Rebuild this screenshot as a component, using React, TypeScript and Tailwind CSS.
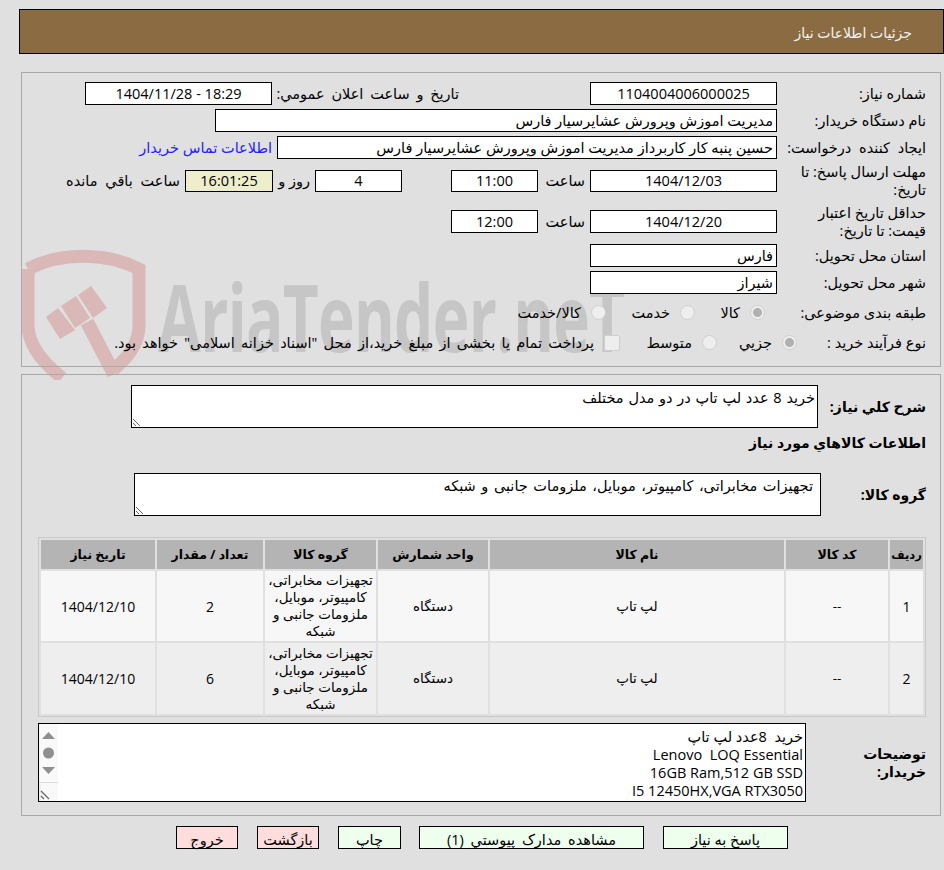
import React from 'react';

const Box: React.FC<{ className?: string; short?: boolean; children?: React.ReactNode }> = ({ className = 'bg-white', short, children }) => (
  <div className={`${short ? 'h-[22px] leading-[20px]' : 'h-[23px] leading-[21px]'} shrink-0 border border-black whitespace-nowrap overflow-hidden ${className}`}>
    {children}
  </div>
);

const Label: React.FC<{ className?: string; children: React.ReactNode }> = ({ className = '', children }) => (
  <div className={`w-[149px] shrink-0 pl-1 leading-[18px] ${className}`}>{children}</div>
);

const Radio: React.FC<{ checked?: boolean; className?: string }> = ({ checked, className = '' }) => (
  <input
    type="radio"
    disabled
    readOnly
    checked={!!checked}
    className={`appearance-none size-[15px] shrink-0 rounded-full border border-[#cfcfcf] bg-[#eeeeee] checked:bg-[radial-gradient(circle,#b0b0b0_0,#b0b0b0_4px,#eeeeee_5px)] ${className}`}
  />
);

const rows = [
  { id: 1, qty: 2 },
  { id: 2, qty: 6 },
];

const headers = ['ردیف', 'کد کالا', 'نام کالا', 'واحد شمارش', 'گروه کالا', 'تعداد / مقدار', 'تاریخ نیاز'];

const Watermark = () => (
  <div className="absolute inset-x-0 top-0 h-[390px] overflow-hidden">
    <svg className="absolute left-[15px] top-[245px]" width="140" height="135" viewBox="15 245 140 135" fill="none">
      <path
        d="M28 269 C60 252 106 252 139 269 V325 C139 345 127 358 113 370 M28 269 V325 C28 345 42 362 62 378"
        stroke="#dbb8b8"
        strokeWidth="13"
      />
      <path d="M46 317 L58 308 L75 330 L60 339 Z M61 306 L76 296 L90 318 L75 328 Z M78 295 L91 286 L107 308 L93 318 Z" fill="#dbb8b8" />
      <path d="M87 322 L114 374" stroke="#dbb8b8" strokeWidth="14" />
    </svg>
    <div
      dir="ltr"
      className="absolute left-[158px] top-[256px] font-['Open_Sans',sans-serif] font-bold text-[94px] leading-[120px] tracking-[-1px] text-[#c6c6c6] whitespace-nowrap origin-left scale-x-[0.66]"
    >
      AriaTender.neT
    </div>
  </div>
);

export default function App() {
  return (
    <div
      dir="rtl"
      className="relative min-h-[870px] overflow-hidden bg-[#e0e0e0] pt-[9px] font-['Open_Sans','DejaVu_Sans',sans-serif] text-[14.5px] text-black"
    >
      <Watermark />

      <div className="relative">
        <header className="ml-[19px] flex h-[45px] items-center border border-black bg-[#8b6c42] pr-[31px] pt-[1px] text-[14px] text-[#f2f2f2]">
          جزئیات اطلاعات نیاز
        </header>

        {/* main info */}
        <section className="ml-[21px] mr-[3px] mt-[18px] h-[295px] border border-[#a9a9a9] pr-[14px] pt-[9px]">
          <div className="flex h-[23px] items-center">
            <Label>شماره نیاز:</Label>
            <Box className="w-[187px] bg-white text-center">1104004006000025</Box>
            <div className="mr-[131px] w-[187px] shrink-0 whitespace-nowrap [word-spacing:3px]">تاریخ و ساعت اعلان عمومي:</div>
            <Box className="w-[187px] bg-white text-center">18:29 - 1404/11/28</Box>
          </div>
          <div className="mt-1 flex h-[23px] items-center">
            <Label>نام دستگاه خریدار:</Label>
            <Box className="w-[562px] bg-white pr-[3px]">مدیریت اموزش وپرورش عشایرسیار فارس</Box>
          </div>
          <div className="mt-1 flex h-[23px] items-center">
            <Label className="[word-spacing:4px]">ایجاد کننده درخواست:</Label>
            <Box className="w-[500px] bg-white pr-[3px]">حسین پنبه کار کاربرداز مدیریت اموزش وپرورش عشایرسیار فارس</Box>
            <a className="mr-[5px] whitespace-nowrap text-[#2222ff]" href="#">اطلاعات تماس خریدار</a>
          </div>
          <div className="mt-[11px] flex h-[22px] items-center">
            <Label>
              <div className="-my-[9px]">مهلت ارسال پاسخ: تا تاریخ:</div>
            </Label>
            <Box short className="w-[187px] bg-white text-center">1404/12/03</Box>
            <div className="w-[52px] shrink-0 pr-[5px]">ساعت</div>
            <Box short className="w-[87px] bg-white text-center">11:00</Box>
            <div className="w-[49px] shrink-0" />
            <Box short className="w-[87px] bg-white text-center">4</Box>
            <div className="w-[42px] shrink-0 pr-[5px] whitespace-nowrap">روز و</div>
            <Box short className="w-[88px] bg-[#eeeecc] text-center">16:01:25</Box>
            <div className="mr-[5px] whitespace-nowrap [word-spacing:4px]">ساعت باقي مانده</div>
          </div>
          <div className="mt-[18px] flex h-[23px] items-center">
            <Label>
              <div className="-my-[9px]">حداقل تاریخ اعتبار قیمت: تا تاریخ:</div>
            </Label>
            <Box className="w-[187px] bg-white text-center">1404/12/20</Box>
            <div className="w-[52px] shrink-0 pr-[5px]">ساعت</div>
            <Box className="w-[87px] bg-white text-center">12:00</Box>
          </div>
          <div className="mt-[11px] flex h-[23px] items-center">
            <Label>استان محل تحویل:</Label>
            <Box className="w-[187px] bg-white pr-[3px]">فارس</Box>
          </div>
          <div className="mt-1 flex h-[23px] items-center">
            <Label>شهر محل تحویل:</Label>
            <Box className="w-[187px] bg-white pr-[3px]">شیراز</Box>
          </div>
          <div className="mt-[7px] flex h-[23px] items-center">
            <Label>طبقه بندی موضوعی:</Label>
            <Radio checked className="mr-[12px]" />
            <span className="mr-[10px] w-[45px]">کالا</span>
            <Radio />
            <span className="mr-[10px] w-[64px]">خدمت</span>
            <Radio />
            <span className="mr-[10px] whitespace-nowrap">کالا/خدمت</span>
          </div>
          <div className="mt-[7px] flex h-[23px] items-center">
            <Label>نوع فرآیند خرید :</Label>
            <Radio checked className="mr-[-20px]" />
            <span className="mr-[10px] w-[55px]">جزيي</span>
            <Radio />
            <span className="mr-[10px] w-[72px]">متوسط</span>
            <input type="checkbox" disabled className="appearance-none size-[16px] shrink-0 rounded-[2px] border border-[#cfcfcf] bg-[#eeeeee]" />
            <span className="mr-[10px] whitespace-nowrap [word-spacing:2.500px]">پرداخت تمام یا بخشی از مبلغ خرید،از محل "اسناد خزانه اسلامی" خواهد بود.</span>
          </div>
        </section>

        {/* description, items */}
        <section className="ml-[21px] mr-[3px] mt-[7px] h-[442px] border border-[#a9a9a9] pr-[14px] pt-[10px]">
          <div className="flex items-center">
            <div className="w-[108px] shrink-0 text-[14px] font-bold">شرح کلي نیاز:</div>
            <textarea
              readOnly
              value="خرید 8 عدد لپ تاپ در دو مدل مختلف"
              className="h-[43px] w-[687px] border border-black bg-white pr-[2px] pt-[3px] text-[14.5px] leading-[18px] [word-spacing:1px]"
            />
          </div>
          <div className="mt-[6px] text-[14px] font-bold leading-[18px]">اطلاعات کالاهاي مورد نياز</div>
          <div className="mt-[21px] flex items-center">
            <div className="w-[105px] shrink-0 text-[14px] font-bold">گروه کالا:</div>
            <textarea
              readOnly
              value="تجهیزات مخابراتی، کامپیوتر، موبایل، ملزومات جانبی و شبکه"
              className="h-[43px] w-[687px] border border-black bg-white pr-[7px] pt-[3px] text-[14.5px] leading-[18px] [word-spacing:1.800px]"
            />
          </div>

          <table className="mt-[21px] w-[888px] table-fixed border-separate border-spacing-[2px] border border-[#c8c8c8] text-center text-[13.500px] leading-[17px]">
            <colgroup>
              <col className="w-[33px]" />
              <col className="w-[102px]" />
              <col className="w-[294px]" />
              <col className="w-[110px]" />
              <col className="w-[111px]" />
              <col className="w-[106px]" />
              <col className="w-[114px]" />
            </colgroup>
            <thead>
              <tr className="h-[29px] bg-[#b4b4b4]">
                {headers.map((h, i) => (
                  <th key={h} className={`p-0 font-bold whitespace-nowrap ${i === 0 ? 'text-[11.500px]' : 'text-[12.500px]'}`}>{h}</th>
                ))}
              </tr>
            </thead>
            <tbody>
              {rows.map((r) => (
                <tr key={r.id} className={r.id === 1 ? 'bg-[#f7f7f7]' : 'bg-[#eeeeee]'}>
                  <td className="p-0 text-[14px]">{r.id}</td>
                  <td className="p-0">--</td>
                  <td className="p-0">لپ تاپ</td>
                  <td className="p-0">دستگاه</td>
                  <td className={`p-0 ${r.id === 1 ? 'h-[70px]' : 'h-[71px]'}`}>تجهیزات مخابراتی، کامپیوتر، موبایل، ملزومات جانبی و شبکه</td>
                  <td className="p-0 text-[14px]">{r.qty}</td>
                  <td className="p-0 text-[14px]">1404/12/10</td>
                </tr>
              ))}
            </tbody>
          </table>

          <div className="mt-[6px] flex items-center">
            <div className="w-[120px] shrink-0 pl-[20px] text-[14px] font-bold leading-[18px]">توضیحات خریدار:</div>
            <div className="flex h-[79px] w-[768px] border border-black bg-white">
              <div className="flex-1 overflow-hidden pr-[2px] pt-[4px] leading-[18px]">
                <div>خرید&nbsp; 8عدد لپ تاپ</div>
                <div>Lenovo&nbsp; LOQ Essential</div>
                <div>16GB Ram,512 GB SSD</div>
                <div>I5 12450HX,VGA RTX3050</div>
              </div>
              <svg className="shrink-0" width="19" height="77" viewBox="0 0 19 77">
                <rect width="19" height="77" fill="#f9f9f9" />
                <path d="M3 15 L9.500 8 L16 15 Z M3 43 L16 43 L9.500 50 Z" fill="#8f8f8f" />
                <circle cx="9.500" cy="29" r="5.500" fill="#8f8f8f" />
                <path d="M0 58.500 H19" stroke="#dcdcdc" />
                <path d="M1 60 V77" stroke="#e4e4e4" />
                <path d="M2 67 L10 75 M2 72 L5 75" stroke="#666" strokeWidth="1.300" />
              </svg>
            </div>
          </div>
        </section>

        {/* actions */}
        <div className="mt-[10px] flex pr-[156px] leading-[21px]">
          <button className="h-[23px] w-[125px] border border-black bg-[#eeffee] pt-[2px]">پاسخ به نیاز</button>
          <button className="mr-[19px] h-[23px] w-[225px] border border-black bg-[#eeffee] pt-[2px] [word-spacing:3px]">مشاهده مدارک پیوستي (1)</button>
          <button className="mr-[18px] h-[23px] w-[63px] border border-black bg-[#eeffee] pt-[2px]">چاپ</button>
          <button className="mr-[19px] h-[23px] w-[62px] border border-black bg-[#ffdddd] pt-[2px]">بازگشت</button>
          <button className="mr-[19px] h-[23px] w-[62px] border border-black bg-[#ffdddd] pt-[2px]">خروج</button>
        </div>
      </div>
    </div>
  );
}
